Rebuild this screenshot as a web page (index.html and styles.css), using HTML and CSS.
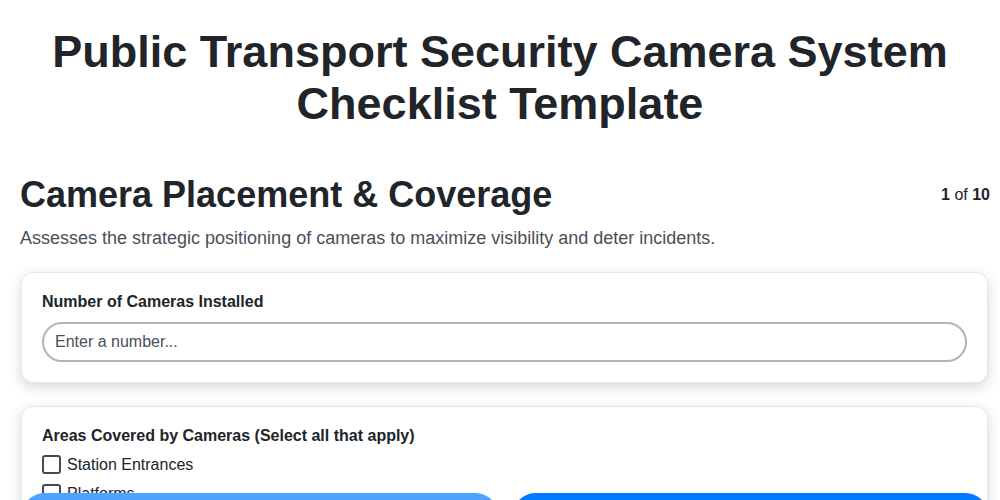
FILE: index.html
```html
<!DOCTYPE html>
<html lang="en">
<head>
<meta charset="utf-8">
<title>Public Transport Security Camera System Checklist Template</title>
<link rel="stylesheet" href="styles.css">
</head>
<body>
<div class="page">
  <h1 class="title">Public Transport Security Camera System Checklist Template</h1>
  <section class="step">
    <div class="step-head">
      <h2 class="step-title">Camera Placement &amp; Coverage</h2>
      <div class="step-count"><b>1</b> of <b>10</b></div>
    </div>
    <p class="step-desc">Assesses the strategic positioning of cameras to maximize visibility and deter incidents.</p>
    <div class="card">
      <label class="q-label" for="cams">Number of Cameras Installed</label>
      <input class="text-input" id="cams" type="text" placeholder="Enter a number...">
    </div>
    <div class="card">
      <div class="q-label">Areas Covered by Cameras (Select all that apply)</div>
      <label class="check"><span class="box"></span>Station Entrances</label>
      <label class="check"><span class="box"></span>Platforms</label>
      <label class="check"><span class="box"></span>Ticketing Areas</label>
    </div>
  </section>
</div>
<nav class="nav">
  <button class="btn btn-prev" type="button">Previous</button>
  <button class="btn btn-next" type="button">Next</button>
</nav>
</body>
</html>
```
FILE: styles.css
```css
* { box-sizing: border-box; }
html, body { margin: 0; padding: 0; background: #fff; }
body {
  font-family: "Liberation Sans", Arial, sans-serif;
  color: #212529;
}
.page {
  padding: 20px 10px 80px 20px;
}
.title {
  margin: 6px 15px 0 5px;
  text-align: center;
  font-size: 45px;
  line-height: 52px;
  font-weight: 700;
  color: #212529;
}
.step { margin-top: 43px; }
.step-head {
  display: flex;
  justify-content: space-between;
  align-items: center;
}
.step-title {
  margin: 0;
  font-size: 36px;
  line-height: 44px;
  font-weight: 700;
}
.step-count {
  font-size: 16px;
  color: #212529;
}
.step-desc {
  margin: 9px 0 22px;
  font-size: 18px;
  line-height: 24px;
  color: #495057;
}
.card {
  margin: 0 2px 23px 1px;
  padding: 19px 20px 20px;
  background: #fff;
  border: 1px solid #e6e7ec;
  border-radius: 12px;
  box-shadow: 0 4px 14px rgba(0, 0, 0, 0.16);
}
.q-label {
  display: block;
  font-size: 16px;
  font-weight: 700;
  line-height: 20px;
  margin-bottom: 4px;
  color: #212529;
}
.text-input {
  display: block;
  width: 100%;
  height: 40px;
  margin-top: 10px;
  padding: 0 11px;
  border: 2px solid #adb5bd;
  border-radius: 20px;
  font-family: inherit;
  font-size: 16px;
  color: #212529;
  background: #fff;
  outline: none;
}
.text-input::placeholder { color: #495057; }
.check {
  display: flex;
  align-items: center;
  gap: 6px;
  font-size: 16px;
  line-height: 20px;
  height: 29px;
  color: #212529;
}
.box {
  width: 19px;
  height: 19px;
  border: 2px solid #454b55;
  border-radius: 3px;
  background: #fff;
}
.nav {
  position: fixed;
  left: 22px;
  right: 12px;
  bottom: -38px;
  display: flex;
  gap: 15px;
}
.btn {
  flex: 1;
  height: 45px;
  border: 0;
  border-radius: 23px;
  font-family: inherit;
  font-size: 16px;
  font-weight: 700;
  color: #fff;
  background: #007bff;
}
.btn-prev { background: #4da3ff; }
```
